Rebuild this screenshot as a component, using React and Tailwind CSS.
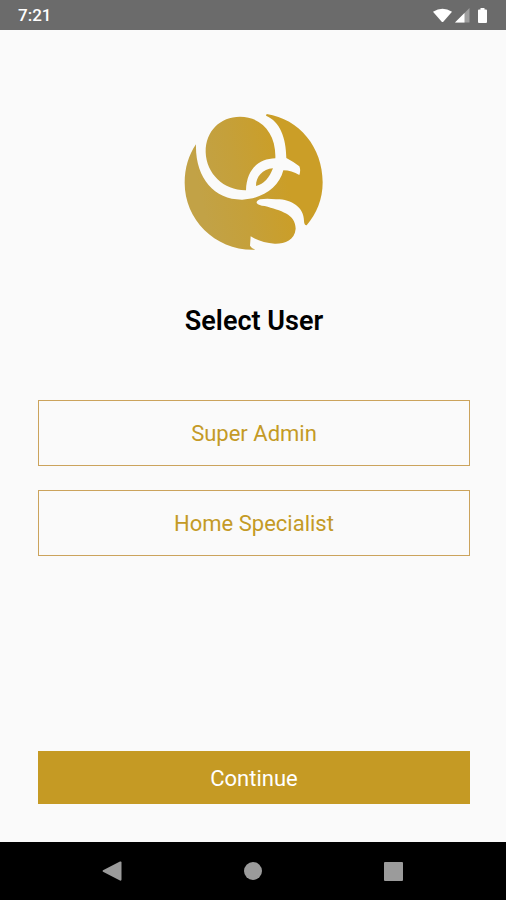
const roles = ['Super Admin', 'Home Specialist']

function StatusBar() {
  return (
    <header className="flex h-[30px] items-center justify-between bg-[#6b6b6b] pl-[18px] pr-4 pt-0.5 text-white">
      <span className="text-[17px] font-medium">7:21</span>
      <svg className="h-[18px] w-[58px]" viewBox="0 0 58 18" fill="currentColor" aria-label="Wi-Fi, signal, battery">
        <path d="M1 4.8Q10.500 -1.500 20 4.800L11.500 14.500Q10.500 15.500 9.500 14.500Z" />
        <path d="M37.500 1V15.500H23Z" opacity="0.35" />
        <path d="M32.500 6V15.500H23Z" />
        <path d="M48.500 1h4v1.500h1.500q1 0 1 1v11.500q0 1-1 1h-7q-1 0-1-1v-11.500q0-1 1-1h1.500z" />
      </svg>
    </header>
  )
}

function Logo() {
  return (
    <svg className="h-[156px] w-40" viewBox="0 0 480 468" role="img" aria-label="QS logo">
      <defs>
        <linearGradient id="gold" gradientUnits="userSpaceOnUse" x1="70" y1="240" x2="330" y2="180">
          <stop offset="0" stopColor="#c2a246" />
          <stop offset="0.45" stopColor="#c5a03a" />
          <stop offset="1" stopColor="#cb9e27" />
        </linearGradient>
      </defs>
      <g fill="url(#gold)">
        {/* inside of the Q */}
        <path d="M95 145C94 82 138 38 198 38C262 38 307 88 304 163C258 164 218 192 216 259C150 260 97 210 95 145Z" />
        {/* inside of the Q's loop */}
        <path d="M297 193C266 195 245 219 246 246C270 241 286 221 297 193Z" />
        {/* disc around both letters */}
        <path d="M278 30C376 45 446 130 446 235C446 285 428 330 398 364Q391 365 390 352C391 310 352 285 306 286Q278 283 258 286Q247 290 248 297Q254 305 272 306C320 320 365 330 365 374C362 410 330 420 302 419C276 417 250 410 230 397L228 425Q233 434 244 437C125 441 32 348 32 236C32 192 44 153 66 121C63 220 120 288 205 287C265 285 315 250 328 199Q353 199 376 213Q381 198 376 187Q360 174 337 162C336 100 318 53 276 35Z" />
      </g>
    </svg>
  )
}

function NavBar() {
  return (
    <nav className="flex h-[58px] items-center bg-black px-[42px] text-[#9b9b9b]">
      <button type="button" aria-label="Back" className="flex flex-1 justify-center">
        <svg className="h-5 w-5" viewBox="0 0 20 20" fill="currentColor">
          <path d="M18 0.500Q19.500 0 19.500 1.500V18.500Q19.500 20 18 19.500L1 10.700Q0 10 1 9.300Z" />
        </svg>
      </button>
      <button type="button" aria-label="Home" className="flex flex-1 justify-center">
        <span className="h-[18px] w-[18px] rounded-full bg-current" />
      </button>
      <button type="button" aria-label="Recent apps" className="flex flex-1 justify-center">
        <span className="h-[19px] w-[19px] rounded-[1px] bg-current" />
      </button>
    </nav>
  )
}

export default function App() {
  return (
    <div className="flex min-h-screen flex-col bg-[#fafafa] font-[Roboto,sans-serif]">
      <StatusBar />
      <main className="flex flex-1 flex-col pb-[38px] pl-[38px] pr-9 pt-[74px]">
        <div className="flex justify-center">
          <Logo />
        </div>
        <h1 className="mt-11 text-center text-[27px] font-semibold leading-[34px] text-black">Select User</h1>
        <div className="mt-[62px] flex flex-col gap-6">
          {roles.map((role) => (
            <button
              key={role}
              type="button"
              className="h-[66px] border border-[#cba35c] text-[22px] text-[#c49a26]"
            >
              {role}
            </button>
          ))}
        </div>
        <button type="button" className="mt-auto h-[53px] bg-[#c59a24] pt-0.5 text-[22px] text-white">
          Continue
        </button>
      </main>
      <NavBar />
    </div>
  )
}
